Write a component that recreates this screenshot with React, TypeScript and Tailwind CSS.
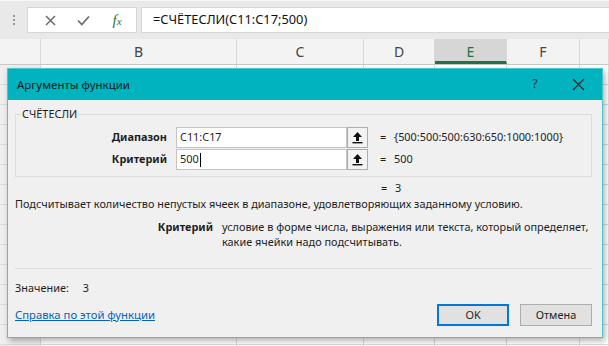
import React from "react";

const UpBtn = () => (
  <div className="w-[21px] h-[21px] border border-[#adadad] bg-[#f3f3f3] flex items-center justify-center">
    <svg width="11" height="13" viewBox="0 0 11 13">
      <path d="M5.5 1 L1 6 H4 V10 H7 V6 H10 Z" fill="#111" />
      <rect x="0.5" y="11" width="10" height="1.4" fill="#111" />
    </svg>
  </div>
);

export default function App() {
  const cols = [
    { w: 41, l: "" },
    { w: 196, l: "B" },
    { w: 127, l: "C" },
    { w: 71, l: "D" },
    { w: 72, l: "E", sel: true },
    { w: 73, l: "F" },
    { w: 29, l: "" },
  ];
  return (
    <div className="w-[609px] h-[346px] relative overflow-hidden bg-white font-['Noto_Sans',sans-serif] text-[10.9px] text-[#1e1e1e]">
      {/* formula bar */}
      <div className="h-[39px] bg-[#e9e9e9] border-t border-[#f7f7f7] flex items-start pt-[6px]">
        <div className="w-[27px] flex flex-col items-center gap-[2px] pt-[8px]">
          <div className="w-[2px] h-[2px] bg-[#9a9a9a]" />
          <div className="w-[2px] h-[2px] bg-[#9a9a9a]" />
          <div className="w-[2px] h-[2px] bg-[#9a9a9a]" />
        </div>
        <div className="w-[110px] h-[26px] bg-white border border-[#d6d6d6] flex items-center">
          <div className="w-[40px] flex justify-center pl-[5px]">
            <svg width="11" height="11" viewBox="0 0 11 11">
              <path d="M1 1 L10 10 M10 1 L1 10" stroke="#6b6b6b" strokeWidth="1.5" />
            </svg>
          </div>
          <div className="w-[30px] flex justify-center">
            <svg width="13" height="11" viewBox="0 0 13 11">
              <path d="M1 5.5 L4.8 9.5 L12 1.5" stroke="#6b6b6b" strokeWidth="1.7" fill="none" />
            </svg>
          </div>
          <div className="w-[38px] flex justify-center">
            <span className="font-['Liberation_Serif',serif] italic text-[#217346] text-[15px] leading-none">
              f<span className="text-[11px]">x</span>
            </span>
          </div>
        </div>
        <div className="ml-[4px] flex-1 h-[26px] bg-white border border-r-0 border-[#d6d6d6] flex items-center pl-[11px] text-[12.8px] text-[#111]">
          =СЧЁТЕСЛИ(C11:C17;500)
        </div>
      </div>
      {/* column headers */}
      <div className="h-[26px] flex bg-[#f3f3f3] border-b border-[#c8c8c8]">
        {cols.map((c, i) => (
          <div
            key={i}
            style={{ width: c.w }}
            className={
              "h-full flex items-center justify-center text-[14px] border-r border-[#d8d8d8] " +
              (c.sel ? "bg-[#d6d6d6] border-b-[3px] border-b-[#217346] text-[#217346] pt-[2px]" : "text-[#444]")
            }
          >
            {c.l}
          </div>
        ))}
      </div>
      {/* grid rows */}
      <div className="flex flex-col">
        {Array.from({ length: 15 }).map((_, r) => (
          <div key={r} className="h-[20px] flex border-b border-[#dadada]">
            {cols.map((c, i) => (
              <div
                key={i}
                style={{ width: c.w }}
                className={"h-full border-r border-[#dadada] " + (i === 0 ? "bg-[#efefef]" : "bg-white")}
              />
            ))}
          </div>
        ))}
      </div>

      {/* dialog */}
      <div className="absolute left-[7px] top-[68px] w-[596px] h-[270px] border border-[#49c3cc] bg-[#f0f0f0] shadow-[2px_3px_6px_rgba(0,0,0,0.3)] flex flex-col">
        <div className="h-[31px] bg-[#00b3be] flex items-center pl-[9px] text-[11.5px] text-[#1a1a1a] shrink-0">
          <span className="flex-1">Аргументы функции</span>
          <span className="w-[20px] text-center text-[12.5px] text-[#333] mr-[26px]">?</span>
          <div className="w-[14px] flex justify-center mr-[17px]">
            <svg width="13" height="13" viewBox="0 0 13 13">
              <path d="M1 1 L12 12 M12 1 L1 12" stroke="#2a2a2a" strokeWidth="1.2" />
            </svg>
          </div>
        </div>
        <div className="flex-1 flex flex-col pl-[7px] pr-[10px]">
          {/* group box */}
          <div className="mt-[14px] h-[63px] border border-[#dcdcdc] relative pt-[12px] flex flex-col gap-[1px]">
            <span className="absolute -top-[9px] left-[5px] px-[1px] bg-[#f0f0f0] leading-[16px]">СЧЁТЕСЛИ</span>
            {[
              { l: "Диапазон", v: "C11:C17", r: "{500:500:500:630:650:1000:1000}" },
              { l: "Критерий", v: "500", r: "500", caret: true },
            ].map((row) => (
              <div key={row.l} className="h-[21px] flex items-center">
                <div className="w-[151px] text-right font-bold">{row.l}</div>
                <div className="ml-[9px] w-[171px] h-[21px] bg-white border border-[#c4c4c4] flex items-center pl-[3px]">
                  {row.v}
                  {row.caret && <span className="w-[1px] h-[14px] bg-black ml-[1px]" />}
                </div>
                <UpBtn />
                <span className="ml-[12px] w-[14px]">=</span>
                <span>{row.r}</span>
              </div>
            ))}
          </div>
          <div className="mt-[3px] leading-[15px] flex">
            <span className="ml-[366px] w-[14px]">=</span>
            <span>3</span>
          </div>
          <div className="mt-[1px] leading-[15px] whitespace-nowrap">
            Подсчитывает количество непустых ячеек в диапазоне, удовлетворяющих заданному условию.
          </div>
          <div className="mt-[8px] leading-[15px] flex">
            <div className="w-[198px] text-right font-bold shrink-0">Критерий</div>
            <div className="ml-[9px] whitespace-nowrap">
              условие в форме числа, выражения или текста, который определяет,
              <br />
              какие ячейки надо подсчитывать.
            </div>
          </div>
          <div className="mt-[19px] h-[1px] bg-[#dcdcdc]" />
          <div className="mt-[11px] leading-[15px] flex">
            <span>Значение:</span>
            <span className="ml-[14px]">3</span>
          </div>
          <div className="mt-[9px] flex items-center">
            <span className="flex-1 text-[#0563c1] underline text-[11.3px]">Справка по этой функции</span>
            <div className="w-[72px] h-[22px] border-2 border-[#0078d7] bg-[#e1e1e1] flex items-center justify-center">
              OK
            </div>
            <div className="ml-[11px] w-[72px] h-[22px] border border-[#adadad] bg-[#e1e1e1] flex items-center justify-center">
              Отмена
            </div>
          </div>
        </div>
      </div>
    </div>
  );
}
